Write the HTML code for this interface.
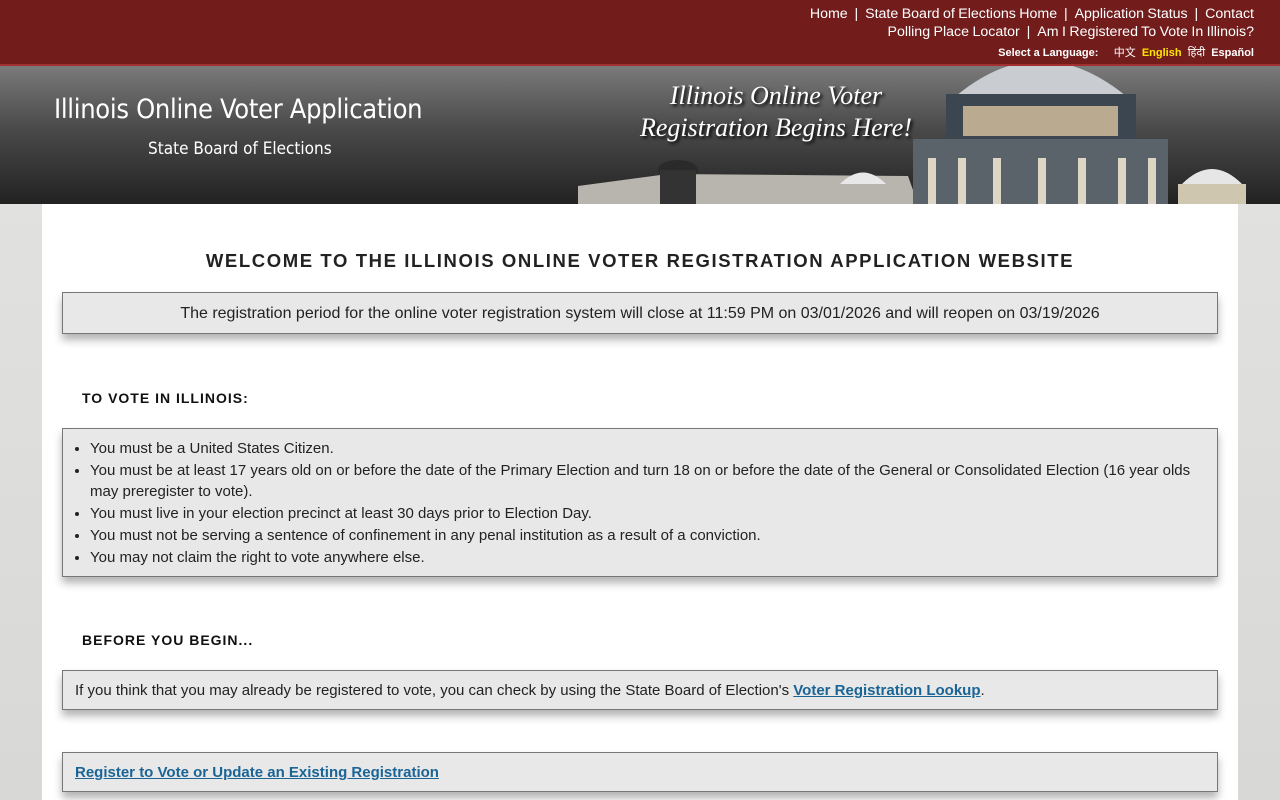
<!DOCTYPE html>
<html><head><meta charset="utf-8"><style>
*{box-sizing:border-box;margin:0;padding:0}
body{width:1280px;height:800px;overflow:hidden;background:linear-gradient(#e4e4e2,#d8d8d6);font-family:"Liberation Sans",Arial,sans-serif;color:#222;position:relative}
#top{position:absolute;left:0;top:0;width:1280px;height:66px;background:#721c1c;border-bottom:2px solid #a23030}
.nav{position:absolute;right:26px;color:#fff;font-size:14.2px;text-align:right;white-space:nowrap;word-spacing:-0.5px}
.lang{position:absolute;right:26px;top:44px;color:#fff;font-size:11px;font-weight:bold}
#hdr{position:absolute;left:0;top:66px;width:1280px;height:138px;background:linear-gradient(#7a7a7a,#4a4a4a 45%,#222 100%);overflow:hidden}
.t1{position:absolute;left:54px;top:28px;color:#fff;font-size:27px;font-family:"DejaVu Sans Condensed","Liberation Sans Narrow",sans-serif;letter-spacing:-0.3px}
.t2{position:absolute;left:148px;top:73px;color:#fff;font-size:17px;font-family:"DejaVu Sans Condensed","Liberation Sans Narrow",sans-serif}
.slog{position:absolute;left:626px;top:14px;color:#fff;font-family:"Liberation Serif",serif;font-style:italic;font-size:26px;line-height:32px;text-shadow:2px 2px 3px #000;text-align:center;width:300px;white-space:nowrap}
#main{position:absolute;left:42px;top:204px;width:1196px;height:596px;background:#fff}
h1{position:absolute;left:0;width:1196px;top:46px;text-align:center;font-size:18.5px;letter-spacing:1.6px;font-weight:bold;color:#222}
h2{position:absolute;left:40px;font-size:14px;letter-spacing:1px;font-weight:bold;color:#111}
.box{position:absolute;left:20px;width:1156px;background:#e8e8e8;border:1px solid #777;box-shadow:0 6px 8px rgba(0,0,0,.3);font-size:15px}
a{color:#1a6496;font-weight:bold;text-decoration:underline}
ul{padding-left:27px;line-height:21.7px}
</style></head><body>
<div id="top">
<div class="nav" style="top:6px">Home&nbsp; | &nbsp;State Board of Elections Home&nbsp; | &nbsp;Application Status&nbsp; | &nbsp;Contact</div>
<div class="nav" style="top:24px">Polling Place Locator&nbsp; | &nbsp;Am I Registered To Vote In Illinois?</div>
<div class="lang">Select a Language: &nbsp;&nbsp;&nbsp; <span style="font-weight:normal;font-family:'Noto Sans CJK SC',sans-serif">中文</span> &nbsp;<span style="color:#ffe600">English</span> &nbsp;<span style="font-weight:normal">हिंदी</span> &nbsp;Español</div>
</div>
<div id="hdr">
<div class="t1">Illinois Online Voter Application</div>
<div class="t2">State Board of Elections</div>
<svg style="position:absolute;left:578px;top:0" width="702" height="138">
<path d="M0 120 L90 108 L330 110 L340 138 L0 138Z" fill="#b8b4ae"/>
<ellipse cx="100" cy="104" rx="20" ry="10" fill="#2a2a2a"/><rect x="82" y="104" width="36" height="34" fill="#333"/>
<path d="M262 118 Q285 95 308 118Z" fill="#e8e8e8"/>
<path d="M378 30 Q462 -40 548 30Z" fill="#c9ccd0"/>
<rect x="368" y="28" width="190" height="45" fill="#3c4650"/>
<rect x="385" y="40" width="155" height="30" fill="#b9aa90"/>
<rect x="335" y="73" width="255" height="65" fill="#5a626a"/>
<g fill="#ddd6c4"><rect x="350" y="92" width="8" height="46"/><rect x="380" y="92" width="8" height="46"/><rect x="415" y="92" width="8" height="46"/><rect x="460" y="92" width="8" height="46"/><rect x="500" y="92" width="8" height="46"/><rect x="540" y="92" width="8" height="46"/><rect x="570" y="92" width="8" height="46"/></g>
<path d="M604 118 Q634 88 664 118Z" fill="#e6e6e6"/><rect x="600" y="118" width="68" height="20" fill="#cfc6b0"/>
</svg>
<div class="slog">Illinois Online Voter<br>Registration Begins Here!</div>
</div>
<div id="main">
<h1>WELCOME TO THE ILLINOIS ONLINE VOTER REGISTRATION APPLICATION WEBSITE</h1>
<div class="box" style="top:88px;height:42px;text-align:center;line-height:42px;font-size:16px">The registration period for the online voter registration system will close at 11:59 PM on 03/01/2026 and will reopen on 03/19/2026</div>
<h2 style="top:186px">TO VOTE IN ILLINOIS:</h2>
<div class="box" style="top:224px;height:149px;padding-top:9px;padding-right:20px">
<ul><li>You must be a United States Citizen.</li>
<li>You must be at least 17 years old on or before the date of the Primary Election and turn 18 on or before the date of the General or Consolidated Election (16 year olds may preregister to vote).</li>
<li>You must live in your election precinct at least 30 days prior to Election Day.</li>
<li>You must not be serving a sentence of confinement in any penal institution as a result of a conviction.</li>
<li>You may not claim the right to vote anywhere else.</li></ul></div>
<h2 style="top:428px">BEFORE YOU BEGIN...</h2>
<div class="box" style="top:466px;height:40px;line-height:40px;padding-left:12px">If you think that you may already be registered to vote, you can check by using the State Board of Election's <a>Voter Registration Lookup</a>.</div>
<div class="box" style="top:548px;height:40px;line-height:40px;padding-left:12px"><a>Register to Vote or Update an Existing Registration</a></div>
</div>
</body></html>
